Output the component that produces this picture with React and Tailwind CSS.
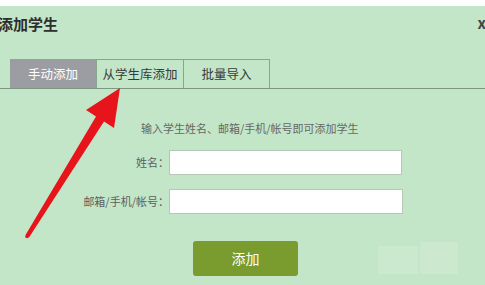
import React from 'react';

const font = { fontFamily: '"Noto Sans CJK SC", "Noto Sans", sans-serif' };

const Tab = ({ label, active, width }) => (
  <div
    className={`h-[29px] flex items-center justify-center text-[12.5px] border border-b-0 ${
      active ? 'bg-[#9c9da3] text-white border-[#9c9da3]' : 'text-[#3a3a3a] border-[#8aa58d]'
    } ${width}`}
  >
    {label}
  </div>
);

const Field = ({ label, wide }) => (
  <div className="flex items-center h-[25px]">
    <span className="w-[169px] text-right text-[11px] text-[#5e5e5e]">{label}</span>
    <input
      className={`h-[25px] bg-white border border-[#b5c7b6] outline-none ${wide ? 'w-[234px]' : 'w-[233px]'}`}
    />
  </div>
);

export default function App() {
  return (
    <div style={font} className="relative w-[485px] h-[285px] overflow-hidden bg-[#c3e6c8]">
      <div className="h-[6px] bg-white" />

      {/* header */}
      <div className="flex items-center justify-between h-[34px] ml-[-2px]">
        <h1 className="text-[15px] font-bold text-[#2e2e2e] leading-none">添加学生</h1>
        <span className="text-[15px] font-bold text-[#444] mr-[-1px]">x</span>
      </div>

      {/* tabs */}
      <div className="mt-[19px] flex pl-[10px] border-b border-[#7f9882]">
        <Tab label="手动添加" active width="w-[86px]" />
        <Tab label="从学生库添加" width="w-[88px]" />
        <Tab label="批量导入" width="w-[86px] border-l-0" />
      </div>

      {/* form */}
      <div className="pt-[30px]">
        <p className="pl-[141px] text-[11px] text-[#666] leading-[18px]">输入学生姓名、邮箱/手机/帐号即可添加学生</p>
        <div className="mt-[13px] flex flex-col gap-[14px]">
          <Field label="姓名：" />
          <Field label="邮箱/手机/帐号：" wide />
        </div>
        <div className="mt-[27px] pl-[193px]">
          <button className="w-[105px] h-[35px] rounded-[3px] bg-[#7a9b2d] text-white text-[14px]">添加</button>
        </div>
      </div>

      {/* faint watermark */}
      <div className="absolute left-[378px] top-[242px] w-[82px] h-[32px] flex gap-[2px] opacity-25">
        <div className="w-[40px] h-[28px] mt-[4px] bg-[#e4f2e4]" />
        <div className="w-[38px] h-[32px] bg-[#e8f4e8]" />
      </div>

      {/* red arrow */}
      <svg className="absolute left-0 top-0 pointer-events-none" width="485" height="285" viewBox="0 0 485 285">
        <polygon
          points="25.5,235 96,116.5 86,110 120,88 114,128 104,121.5 29,237.5"
          fill="#e8141c"
        />
        <circle cx="27" cy="236.5" r="1.8" fill="#e8141c" />
      </svg>
    </div>
  );
}
